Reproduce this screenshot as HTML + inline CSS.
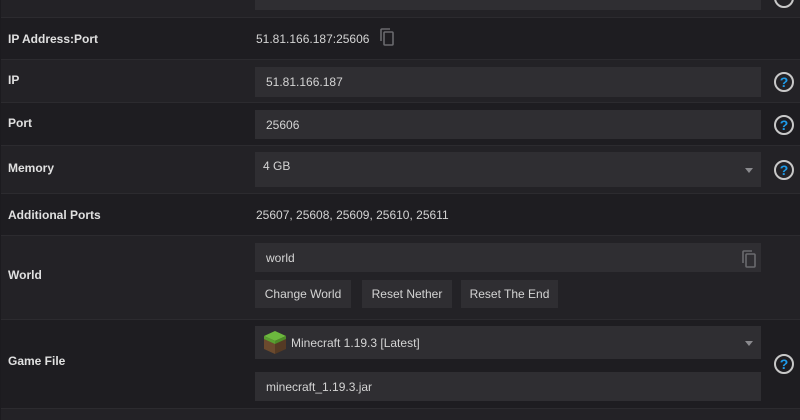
<!DOCTYPE html>
<html><head><style>
*{margin:0;padding:0;box-sizing:border-box}
html,body{width:800px;height:420px;overflow:hidden}
body{background:#1c1b1f;font-family:"Liberation Sans",sans-serif;font-size:12px;color:#d6d6d6;position:relative}
.row{position:absolute;left:1px;right:0;border-bottom:1px solid #2c2b2f}
.l{background:#232226}.d{background:#1e1d21}
.lab{position:absolute;left:8px;font-weight:bold;color:#e0e0e0;font-size:12px}
.inp{position:absolute;left:255px;width:506px;background:#2f2e32;color:#d4d4d4;padding-left:11px;display:flex;align-items:center}
.val{position:absolute;left:256px;color:#d4d4d4}
.help{position:absolute;left:774px;width:20px;height:20px;border:2px solid #c8c8c8;border-radius:50%;color:#1e9be9;font-weight:bold;font-size:14px;text-align:center;line-height:16px}
.caret{position:absolute;right:8px;top:50%;margin-top:-2px;border-left:4px solid transparent;border-right:4px solid transparent;border-top:5px solid #8a8a8e}
.btn{position:absolute;top:280px;height:28px;background:#2f2e32;color:#d4d4d4;display:flex;align-items:center;justify-content:center}
.copy{position:absolute}
</style></head><body>
<div class="row l" style="top:0;height:18px"></div>
<div class="inp" style="top:0;height:10px"></div>
<div class="help" style="top:-12px"></div>
<div class="row d" style="top:18px;height:42px"></div>
<div class="row l" style="top:60px;height:43px"></div>
<div class="row d" style="top:103px;height:43px"></div>
<div class="row l" style="top:146px;height:48px"></div>
<div class="row d" style="top:194px;height:42px"></div>
<div class="row l" style="top:236px;height:84px"></div>
<div class="row d" style="top:320px;height:89px"></div>
<div class="row l" style="top:409px;height:20px"></div>

<div class="lab" style="top:32px">IP Address:Port</div>
<div class="val" style="top:32px">51.81.166.187:25606</div>
<svg class="copy" style="left:378px;top:27px" width="18" height="20" viewBox="0 0 18 20"><path d="M3 14V3a1 1 0 0 1 1-1h8" fill="none" stroke="#6a6a6e" stroke-width="1.6"/><rect x="6" y="5" width="9" height="13" rx="1" fill="none" stroke="#6a6a6e" stroke-width="1.6"/></svg>

<div class="lab" style="top:73px">IP</div>
<div class="inp" style="top:67px;height:30px">51.81.166.187</div>
<div class="help" style="top:72px">?</div>

<div class="lab" style="top:116px">Port</div>
<div class="inp" style="top:110px;height:29px">25606</div>
<div class="help" style="top:115px">?</div>

<div class="lab" style="top:161px">Memory</div>
<div class="inp" style="top:152px;height:35px;padding-left:8px;align-items:flex-start;padding-top:7px">4 GB<span class="caret"></span></div>
<div class="help" style="top:160px">?</div>

<div class="lab" style="top:208px">Additional Ports</div>
<div class="val" style="top:208px">25607, 25608, 25609, 25610, 25611</div>

<div class="lab" style="top:268px">World</div>
<div class="inp" style="top:243px;height:29px">world</div>
<svg class="copy" style="left:740px;top:249px" width="18" height="20" viewBox="0 0 18 20"><path d="M3 14V3a1 1 0 0 1 1-1h8" fill="none" stroke="#6a6a6e" stroke-width="1.6"/><rect x="6" y="5" width="9" height="13" rx="1" fill="none" stroke="#6a6a6e" stroke-width="1.6"/></svg>
<div class="btn" style="left:255px;width:96px">Change World</div>
<div class="btn" style="left:362px;width:90px">Reset Nether</div>
<div class="btn" style="left:461px;width:97px">Reset The End</div>

<div class="lab" style="top:354px">Game File</div>
<div class="inp" style="top:326px;height:33px;padding-left:36px">Minecraft 1.19.3 [Latest]<span class="caret"></span></div>
<svg style="position:absolute;left:262px;top:329px" width="26" height="26" viewBox="0 0 26 26"><polygon points="13,2 24,7 13,12 2,7" fill="#6cb83e"/><polygon points="2,7 13,12 13,25 2,20" fill="#6b4a2e"/><polygon points="13,12 24,7 24,20 13,25" fill="#553a24"/><polygon points="2,7 13,12 13,15 2,10" fill="#58a030"/><polygon points="13,12 24,7 24,10 13,15" fill="#4c8c28"/></svg>
<div class="inp" style="top:372px;height:29px">minecraft_1.19.3.jar</div>
<div class="help" style="top:354px">?</div>
</body></html>
